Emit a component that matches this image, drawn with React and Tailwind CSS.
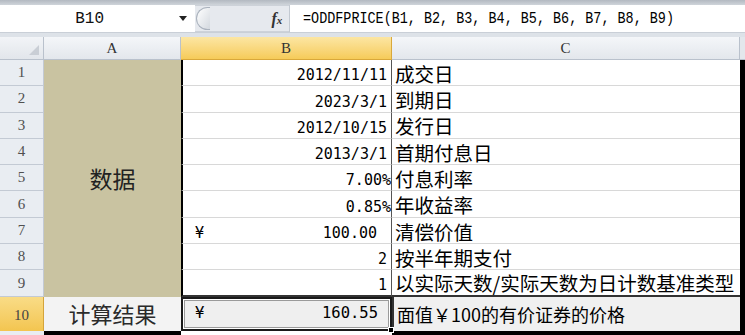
import React from "react";

const mono = "font-['Liberation_Mono',monospace]";
const dmono = "font-['DejaVu_Sans_Mono',monospace]";
const cjk = "font-['Noto_Sans_CJK_SC',sans-serif]";
const serif = "font-['Liberation_Serif',serif]";

const rows = [
  { b: "2012/11/11", c: "成交日" },
  { b: "2023/3/1", c: "到期日" },
  { b: "2012/10/15", c: "发行日" },
  { b: "2013/3/1", c: "首期付息日" },
  { b: "7.00%", c: "付息利率", pct: true },
  { b: "0.85%", c: "年收益率", pct: true },
  { b: "100.00", c: "清偿价值", yen: true },
  { b: "2", c: "按半年期支付" },
  { b: "1", c: "以实际天数/实际天数为日计数基准类型" },
];

function RowHeader({ n }) {
  return (
    <div className={`flex items-center justify-center bg-[#e9edf2] border-r border-b border-[#c3cad4] text-[15px] text-[#505050] leading-none ${serif}`}>
      {n}
    </div>
  );
}

export default function App() {
  return (
    <div className="w-[745px] h-[335px] overflow-hidden bg-white">
      <div className="h-[5px] bg-gradient-to-b from-[#b3b9c1] to-[#cfd4da]" />
      <div className="h-[27px] flex bg-white">
        <div className={`w-[181px] flex items-center justify-center text-[16px] text-[#111] ${mono}`}>B10</div>
        <div className="w-[16px] flex items-center justify-start">
          <div className="w-0 h-0 border-l-[4px] border-r-[4px] border-t-[5px] border-l-transparent border-r-transparent border-t-[#222]" />
        </div>
        <div className="w-[95px] flex items-center bg-[#e6e9ee] border-y border-[#cdd2d9]">
          <div className="w-[14px] h-[23px] ml-[1px] rounded-l-full border border-r-0 border-[#aab2bd] bg-gradient-to-br from-[#ffffff] to-[#d4d9df]" />
          <div className="flex-1" />
          <div className={`mr-[7px] italic font-bold text-[16px] text-[#333] ${serif}`}>
            f<span className="text-[11px]">x</span>
          </div>
        </div>
        <div className="flex-1 flex items-center border-l border-[#c3c9d1] pl-[13px]">
          <span className={`inline-block origin-left scale-x-[0.84] whitespace-pre text-[16px] text-black ${mono}`}>
            =ODDFPRICE(B1, B2, B3, B4, B5, B6, B7, B8, B9)
          </span>
        </div>
      </div>
      <div className="h-[5px] bg-[#dde2e8] border-t border-[#c9cfd7]" />
      <div className="grid grid-cols-[44px_137px_211px_348px_5px] grid-rows-[23px_repeat(9,26.3px)_34px_4px]">
        {/* header row */}
        <div className="relative bg-gradient-to-b from-[#f2f4f7] to-[#e2e6eb] border-r border-b border-[#b9c1cc]">
          <div className="absolute right-[4px] bottom-[4px] w-0 h-0 border-l-[10px] border-b-[10px] border-l-transparent border-b-[#c9ced5]" />
        </div>
        <div className={`flex items-center justify-center bg-gradient-to-b from-[#f4f6f9] to-[#e3e7ec] border-r border-b border-[#b9c1cc] text-[15px] text-[#333] ${serif}`}>A</div>
        <div className={`flex items-center justify-center bg-gradient-to-b from-[#fce6a2] to-[#f6cb58] border-r border-b border-[#d9a83a] text-[15px] text-[#333] ${serif}`}>B</div>
        <div className={`flex items-center justify-center bg-gradient-to-b from-[#f4f6f9] to-[#e3e7ec] border-r border-b border-[#b9c1cc] text-[15px] text-[#333] ${serif}`}>C</div>
        <div className="bg-[#e3e7ec] border-b border-[#b9c1cc]" />

        {rows.map((r, i) => (
          <React.Fragment key={i}>
            <RowHeader n={i + 1} />
            {i === 0 && (
              <div className={`row-span-9 flex items-center justify-center bg-[#c9c3a1] text-[23px] text-[#222] ${cjk}`}>
                数据
              </div>
            )}
            <div
              className={`flex items-end justify-between border-l-[2px] border-l-black border-r border-r-[#555] ${i === 8 ? "border-b-2 border-b-[#333]" : "border-b border-b-[#d8d8d8]"} ${r.pct ? "pr-0" : r.yen ? "pr-[14px]" : "pr-[4px]"} pl-[12px] pb-[2px] text-[15px] leading-none text-black ${dmono}`}
            >
              <span>{r.yen ? "¥" : ""}</span>
              <span>{r.b}</span>
            </div>
            <div
              className={`flex items-end pl-[3px] whitespace-nowrap ${i === 8 ? "border-b-2 border-b-[#333]" : "border-b border-b-[#d8d8d8]"} text-[19.5px] leading-none pb-[2px] text-black ${cjk}`}
            >
              {r.c}
            </div>
            {i === 0 && <div className="row-span-11 bg-black" />}
          </React.Fragment>
        ))}

        {/* row 10 */}
        <div className={`flex items-center justify-center bg-gradient-to-b from-[#f9dc86] to-[#f3c54f] border-r border-[#d4a43a] text-[15px] text-[#444] pt-[4px] ${serif}`}>10</div>
        <div className={`flex items-center justify-center bg-[#f3f3f3] text-[22px] text-[#2a2a2a] ${cjk}`}>计算结果</div>
        <div className="relative border-2 border-[#1a1a1a] bg-white p-[1px]">
          <div className={`h-full flex items-center justify-between bg-[#efefef] border border-[#9a9a9a] pl-[10px] pr-[10px] text-[15.5px] text-black ${dmono}`}>
            <span>¥</span>
            <span>160.55</span>
          </div>
          <div className="absolute right-[-4px] bottom-[-4px] w-[6px] h-[6px] bg-black border border-white" />
        </div>
        <div className={`flex items-center pl-[3px] whitespace-nowrap bg-[#f0f0f0] border-l-2 border-double border-l-[#333] text-[18px] leading-none text-black ${cjk}`}>
          面值￥100的有价证券的价格
        </div>

        {/* bottom strip */}
        <div className="bg-[#e9edf2]" />
        <div className="bg-black" />
        <div className="bg-white" />
        <div className="bg-black" />
      </div>
    </div>
  );
}
